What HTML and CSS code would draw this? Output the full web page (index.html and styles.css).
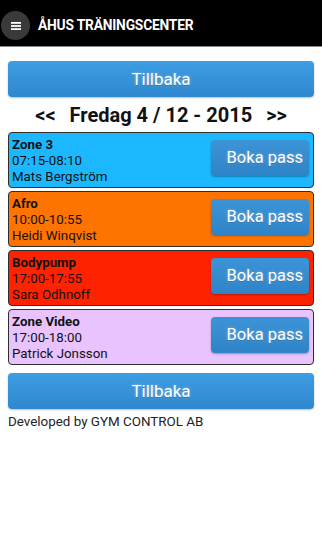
FILE: index.html
```html
<!DOCTYPE html>
<html lang="sv">
<head>
<meta charset="utf-8">
<title>Åhus Träningscenter</title>
<link rel="stylesheet" href="styles.css">
</head>
<body>
<header class="topbar">
  <span class="menu-btn">
    <svg width="10" height="8" viewBox="0 0 10 8"><rect x="0" y="0" width="10" height="1.8" fill="#fff"/><rect x="0" y="3.1" width="10" height="1.8" fill="#fff"/><rect x="0" y="6.2" width="10" height="1.8" fill="#fff"/></svg>
  </span>
  <h1 class="title">ÅHUS TRÄNINGSCENTER</h1>
</header>
<main class="content">
  <a class="btn btn-wide btn-first">Tillbaka</a>
  <div class="datebar"><span>&lt;&lt;</span><span class="date">Fredag 4 / 12 - 2015</span><span>&gt;&gt;</span></div>
  <div class="card c-blue">
    <div class="info"><div class="name">Zone 3</div><div>07:15-08:10</div><div>Mats Bergström</div></div>
    <a class="btn btn-book">Boka pass</a>
  </div>
  <div class="card c-orange">
    <div class="info"><div class="name">Afro</div><div>10:00-10:55</div><div>Heidi Winqvist</div></div>
    <a class="btn btn-book">Boka pass</a>
  </div>
  <div class="card c-red">
    <div class="info"><div class="name">Bodypump</div><div>17:00-17:55</div><div>Sara Odhnoff</div></div>
    <a class="btn btn-book">Boka pass</a>
  </div>
  <div class="card c-purple">
    <div class="info"><div class="name">Zone Video</div><div>17:00-18:00</div><div>Patrick Jonsson</div></div>
    <a class="btn btn-book">Boka pass</a>
  </div>
  <a class="btn btn-wide btn-last">Tillbaka</a>
  <p class="footer">Developed by GYM CONTROL AB</p>
</main>
</body>
</html>
```
FILE: styles.css
```css
html, body {
  margin: 0;
  padding: 0;
  background: #fff;
  font-family: Roboto, "Liberation Sans", sans-serif;
  color: #111;
}
.topbar {
  height: 46px;
  background: #000;
  border-bottom: 1px solid #8a8a8a;
  display: flex;
  align-items: center;
}
.menu-btn {
  width: 29px;
  height: 29px;
  border-radius: 50%;
  background: #3a3a3a;
  margin-left: 1px;
  margin-top: 5px;
  display: flex;
  align-items: center;
  justify-content: center;
}
.menu-btn svg { display: block; }
.title {
  margin: 4px 0 0 8px;
  color: #fff;
  font-size: 13.8px;
  font-weight: 700;
  letter-spacing: -0.2px;
}
.content {
  padding: 0 8px;
}
.btn {
  display: flex;
  align-items: center;
  justify-content: center;
  color: #fff;
  font-size: 17px;
  border-radius: 4px;
  background: linear-gradient(#3e9de2, #2f88cf);
  text-shadow: 0 0 3px rgba(255,255,255,0.45), 0 1px 1px rgba(0,60,120,0.5);
  box-shadow: 0 1px 2px rgba(0,0,0,0.25);
  cursor: pointer;
}
.btn-wide {
  height: 36px;
}
.btn-first { margin-top: 14px; }
.btn-last { margin-top: 8px; }
.datebar {
  margin-top: 6px;
  height: 24px;
  line-height: 24px;
  font-size: 20px;
  font-weight: 700;
  display: flex;
  justify-content: center;
  gap: 14px;
  margin-bottom: 5px;
}
.card {
  height: 56px;
  box-sizing: border-box;
  border: 1px solid #2e2e2e;
  border-radius: 4px;
  margin-bottom: 3px;
  padding: 4px 4px 2px 3px;
  display: flex;
  justify-content: space-between;
  align-items: flex-start;
  font-size: 13.3px;
  line-height: 16px;
}
.card:last-of-type { margin-bottom: 0; }
.name { font-weight: 700; }
.btn-book {
  width: 98px;
  box-sizing: border-box;
  height: 36px;
  margin-top: 3px;
  justify-content: flex-end;
  padding-right: 6px;
  font-size: 16.5px;
  background: linear-gradient(#3c93d6, #2f84c8);
  box-shadow: 0 1px 2px rgba(0,0,0,0.3);
}
.c-blue { background: #1cb8ff; }
.c-orange { background: #ff7300; }
.c-red { background: #ff2200; }
.c-purple { background: #e8c3fd; }
.footer {
  margin: 5px 0 0 0;
  font-size: 13.4px;
  color: #222;
}
```
